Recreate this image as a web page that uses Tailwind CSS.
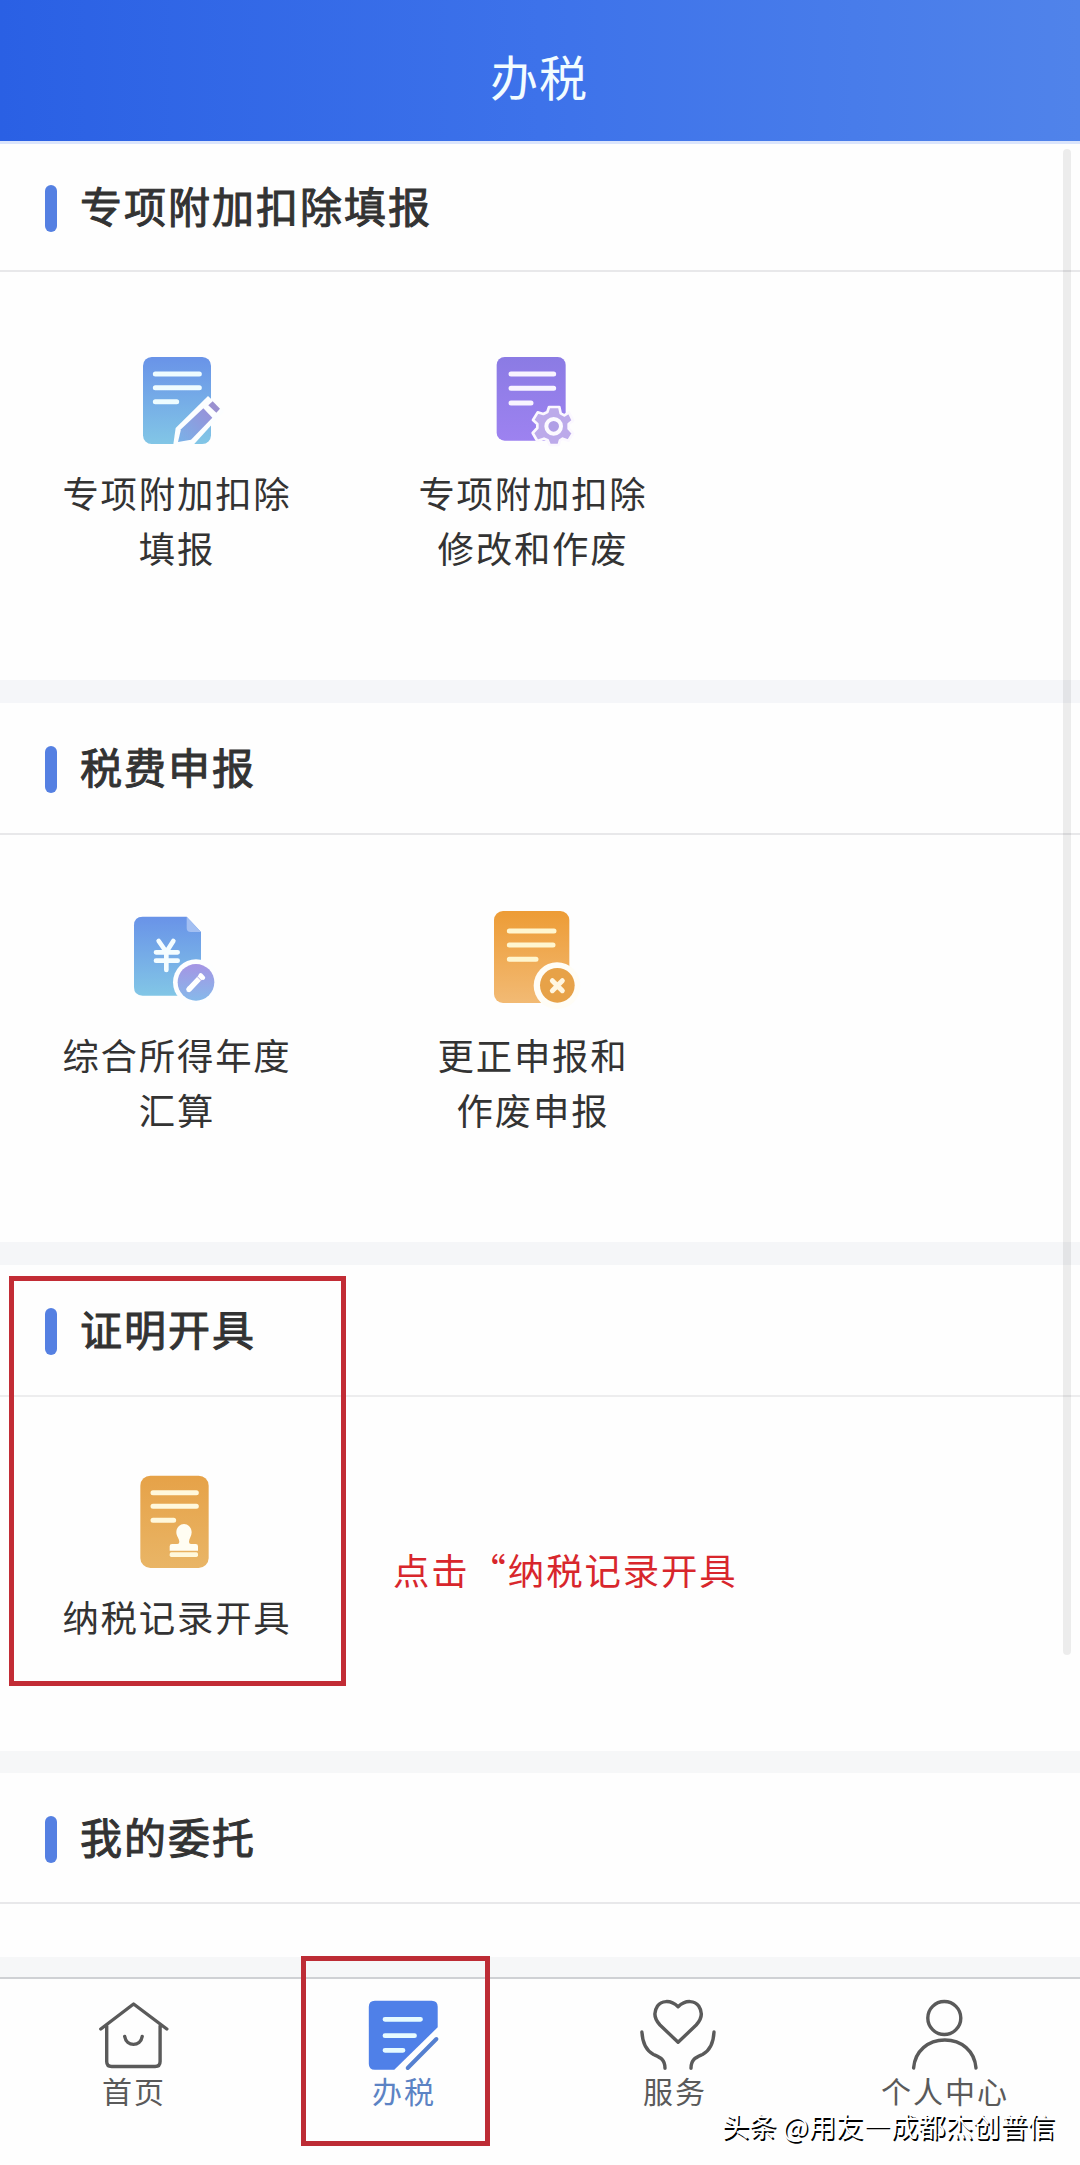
<!DOCTYPE html>
<html lang="zh-CN">
<head>
    <meta charset="UTF-8">
    <meta name="viewport" content="width=device-width, initial-scale=1.0">
    <title>办税</title>
    <script src="https://cdn.jsdelivr.net/npm/@tailwindcss/browser@4"></script>
</head>
<body class="bg-white font-['Noto_Sans_CJK_SC',sans-serif] text-[#333]">
<div class="relative flex flex-col w-[1080px] h-[2165px] overflow-hidden bg-[#fefefe]">

    <!-- 顶部标题 -->
    <header class="flex items-center justify-center h-[141px] shrink-0 pt-[8px] pr-[2px] bg-linear-to-r from-[#2a60e4] via-[#3d72ea] to-[#5083ea]">
        <h1 class="text-[48px] leading-none tracking-[1px] text-[#f2fcff]">办税</h1>
    </header>

    <main class="flex-1 overflow-hidden">
        <!-- 专项附加扣除填报 -->
        <section>
            <div class="flex items-center h-[131px] pt-[2px] pl-[45px] gap-[23px] border-t-3 border-t-[#dbe5fc] border-b-2 border-b-[#e8e8ea]">
                <span class="w-3 h-[47px] rounded-full bg-[#5580e2]"></span>
                <h2 class="pb-[7px] text-[42px] leading-none tracking-[2px] [-webkit-text-stroke:1px_#333]">专项附加扣除填报</h2>
            </div>
            <div class="flex h-[408px] pt-[68px]">
                <div class="flex flex-col items-center w-[354px]">
                    <svg class="size-[120px]" viewBox="-9 0 360 360" fill="none">
                        <defs>
                            <linearGradient id="blue" x1="0" y1="0" x2="0" y2="1">
                                <stop offset="0" stop-color="#6993e8"/>
                                <stop offset="1" stop-color="#82c6e6"/>
                            </linearGradient>
                            <linearGradient id="pen" x1="1" y1="0" x2="0" y2="1">
                                <stop offset="0" stop-color="#9a8fd8"/>
                                <stop offset="1" stop-color="#79b2e8"/>
                            </linearGradient>
                        </defs>
                        <rect x="69" y="51" width="204" height="261" rx="26" fill="url(#blue)"/>
                        <path d="M106 102H238M106 143H238M106 185H170" stroke="#eefcff" stroke-width="15" stroke-linecap="round"/>
                        <path d="M160 313L167 264L264 168L312 214L222 313Z" fill="#fcfeff"/>
                        <path d="M174 306L183 268L250 205L277 233L213 299Z" fill="url(#pen)"/>
                        <path d="M265 196L278 184L300 206L289 218Z" fill="#9a90cf"/>
                    </svg>
                    <p class="mt-[5px] text-[36.4px] leading-[55px] tracking-[1.8px] text-center">专项附加扣除<br>填报</p>
                </div>
                <div class="flex flex-col items-center w-[358px]">
                    <svg class="size-[120px]" viewBox="-21 0 360 360" fill="none">
                        <defs>
                            <linearGradient id="purple" x1="0" y1="0" x2="0" y2="1">
                                <stop offset="0" stop-color="#8b7be4"/>
                                <stop offset="1" stop-color="#9d82f0"/>
                            </linearGradient>
                        </defs>
                        <rect x="50" y="51" width="207" height="251" rx="24" fill="url(#purple)"/>
                        <path d="M93 102H221M93 145H221M93 189H153" stroke="#f8f4ff" stroke-width="15" stroke-linecap="round"/>
                        <path d="M207 201H238L242 220L253 226L267 217L279 242L266 252V266L279 280L265 302L248 296L240 301L236 315H209L203 301L192 296L172 303L158 279L172 264V252L159 240L173 217L190 222L202 216Z" fill="#bcaaea" stroke="#fbf8ff" stroke-width="8" stroke-linejoin="round"/>
                        <circle cx="221" cy="259" r="22" fill="#b09fe6" stroke="#fcfaff" stroke-width="12"/>
                    </svg>
                    <p class="mt-[5px] text-[36.4px] leading-[55px] tracking-[1.8px] text-center">专项附加扣除<br>修改和作废</p>
                </div>
            </div>
        </section>
        <div class="h-[23px] bg-[#f5f6f9]"></div>

        <!-- 税费申报 -->
        <section>
            <div class="flex items-center h-[132px] pt-[3px] pl-[45px] gap-[23px] border-b-2 border-[#e8e8ea]">
                <span class="w-3 h-[47px] rounded-full bg-[#5580e2]"></span>
                <h2 class="pb-[7px] text-[42px] leading-none tracking-[2px] [-webkit-text-stroke:1px_#333]">税费申报</h2>
            </div>
            <div class="flex h-[407px] pt-[67px]">
                <div class="flex flex-col items-center w-[354px]">
                    <svg class="size-[120px]" viewBox="-9 6 360 360" fill="none">
                        <defs>
                            <linearGradient id="badge" x1="0" y1="0" x2="0" y2="1">
                                <stop offset="0" stop-color="#a594e4"/>
                                <stop offset="1" stop-color="#86b9ea"/>
                            </linearGradient>
                        </defs>
                        <path d="M68 50H200L243 96V287H68Q42 287 42 261V76Q42 50 68 50Z" fill="url(#blue)"/>
                        <path d="M200 50L243 96H212Q200 96 200 84Z" fill="#a3bff2"/>
                        <path d="M116 123L139 156L160 123M139 156V210M108 157H173M108 182H173" stroke="#f4fdff" stroke-width="14" stroke-linecap="round" stroke-linejoin="round"/>
                        <circle cx="228" cy="247" r="69" fill="#fdfeff"/>
                        <circle cx="228" cy="247" r="55" fill="url(#badge)"/>
                        <path d="M207 268L241 232" stroke="#fff" stroke-width="16" stroke-linecap="round"/>
                        <path d="M200 275L204 258L216 270Z" fill="#fff"/>
                        <path d="M242 226L249 233" stroke="#fff" stroke-width="13" stroke-linecap="round"/>
                        <path d="M231 229L245 243" stroke="#b0abe4" stroke-width="3"/>
                    </svg>
                    <p class="mt-[5px] text-[36.4px] leading-[55px] tracking-[1.8px] text-center">综合所得年度<br>汇算</p>
                </div>
                <div class="flex flex-col items-center w-[358px]">
                    <svg class="size-[120px]" viewBox="-21 6 360 360" fill="none">
                        <defs>
                            <linearGradient id="orange" x1="0" y1="0" x2="0" y2="1">
                                <stop offset="0" stop-color="#ed9c36"/>
                                <stop offset="1" stop-color="#f2ba74"/>
                            </linearGradient>
                        </defs>
                        <rect x="42" y="33" width="226" height="276" rx="27" fill="url(#orange)"/>
                        <path d="M88 93H222M88 135H219M88 178H168" stroke="#fff6cf" stroke-width="15" stroke-linecap="round"/>
                        <circle cx="231" cy="257" r="70" fill="#fffdf6"/>
                        <circle cx="232" cy="256" r="52" fill="#e7a248"/>
                        <path d="M217 242L247 272M247 242L217 272" stroke="#fff6e0" stroke-width="15" stroke-linecap="round"/>
                    </svg>
                    <p class="mt-[5px] text-[36.4px] leading-[55px] tracking-[1.8px] text-center">更正申报和<br>作废申报</p>
                </div>
            </div>
        </section>
        <div class="h-[23px] bg-[#f5f6f8]"></div>

        <!-- 证明开具 -->
        <section>
            <div class="flex items-center h-[132px] pt-[3px] pl-[45px] gap-[23px] border-b-2 border-[#ededee]">
                <span class="w-3 h-[47px] rounded-full bg-[#5580e2]"></span>
                <h2 class="pb-[7px] text-[42px] leading-none tracking-[2px] [-webkit-text-stroke:1px_#333]">证明开具</h2>
            </div>
            <div class="flex h-[354px] pt-[67px]">
                <div class="flex flex-col items-center w-[354px]">
                    <svg class="size-[120px]" viewBox="-9 12 360 360" fill="none">
                        <defs>
                            <linearGradient id="amber" x1="0" y1="0" x2="0" y2="1">
                                <stop offset="0" stop-color="#e6a248"/>
                                <stop offset="1" stop-color="#e9b566"/>
                            </linearGradient>
                        </defs>
                        <rect x="61" y="47" width="205" height="277" rx="30" fill="url(#amber)"/>
                        <path d="M99 98H229M99 139H229M99 181H161" stroke="#fff8dc" stroke-width="15" stroke-linecap="round"/>
                        <path d="M192 192C205 192 215 203 215 217C215 229 207 236 207 246Q207 252 213 252H227Q234 252 234 259V272H149V259Q149 252 156 252H172Q178 252 178 246C178 236 169 229 169 217C169 203 179 192 192 192Z" fill="#fffdf2"/>
                        <rect x="149" y="277" width="85" height="14" rx="5" fill="#fff8dc"/>
                    </svg>
                    <p class="mt-[5px] text-[36.4px] leading-[55px] tracking-[1.8px] text-center">纳税记录开具</p>
                </div>
                <p class="mt-[78px] ml-[39px] text-[36.4px] leading-[55px] tracking-[1.9px] text-[#d8262c]">点击“纳税记录开具</p>
            </div>
        </section>
        <div class="h-[22px] bg-[#f6f7f8]"></div>

        <!-- 我的委托 -->
        <section>
            <div class="flex items-center h-[131px] pt-[3px] pl-[45px] gap-[23px] border-b-2 border-[#e8e8ea]">
                <span class="w-3 h-[47px] rounded-full bg-[#5580e2]"></span>
                <h2 class="pb-[7px] text-[42px] leading-none tracking-[2px] [-webkit-text-stroke:1px_#333]">我的委托</h2>
            </div>
            <div class="h-[53px]"></div>
        </section>
        <div class="h-[30px] bg-[#f6f7f8]"></div>
    </main>

    <!-- 底部导航 -->
    <nav class="grid grid-cols-4 h-[188px] shrink-0 pt-4 border-t-2 border-[#cfd1d4] bg-[#fefefe] text-[#5a5a5a]">
        <a class="flex flex-col items-center">
            <svg class="size-20" viewBox="0 0 80 80" fill="none" stroke="currentColor" stroke-width="3.4" stroke-linecap="round" stroke-linejoin="round">
                <path d="M5.8 34L38.6 9L71.8 34M11.7 31V66.5Q11.7 71.5 16.7 71.5H60.1Q65.1 71.5 65.1 66.5V31M29.7 41.5C31.5 52 45.5 52 47.2 41.5"/>
            </svg>
            <span class="-mt-[3px] mr-[2px] text-[30px] leading-9 tracking-[2px]">首页</span>
        </a>
        <a class="flex flex-col items-center text-[#5c83c4]">
            <svg class="size-20" viewBox="0 0 80 80" fill="none" stroke-linecap="round">
                <path d="M9.8 5.7H66.7Q72.7 5.7 72.7 11.7V32.3L29.3 74.7H9.8Q3.8 74.7 3.8 68.7V11.7Q3.8 5.7 9.8 5.7Z" fill="#4f80e8"/>
                <path d="M20 24.3H55.5M20 40.7H49.5M20 55.3H38" stroke="#e6fbff" stroke-width="4.8"/>
                <path d="M71.4 44L42.7 73" stroke="#5580d0" stroke-width="4"/>
            </svg>
            <span class="-mt-[3px] mr-[2px] text-[30px] leading-9 tracking-[2px]">办税</span>
        </a>
        <a class="flex flex-col items-center">
            <svg class="size-20 overflow-visible" viewBox="0 0 80 80" fill="none" stroke="currentColor" stroke-width="3.4" stroke-linecap="round" stroke-linejoin="round">
                <path d="M43.1 11.7C35 4 26 6 22.5 11C18.5 17 19.5 24 25 30L43.1 47.3L61.2 30C66.7 24 67.7 17 63.7 11C60.2 6 51.2 4 43.1 11.7Z"/>
                <path d="M6.9 37C7.5 48 11 55.5 18.5 59.5C25 62.5 30 64 30 73.3M79 37C78.5 48 75 55.5 67.5 59.5C61 62.5 56 64 56 73.3"/>
            </svg>
            <span class="-mt-[3px] text-[30px] leading-9 tracking-[2px]">服务</span>
        </a>
        <a class="flex flex-col items-center">
            <svg class="size-20" viewBox="0 0 80 80" fill="none" stroke="currentColor" stroke-width="3.4" stroke-linecap="round">
                <circle cx="39.3" cy="23" r="16.5"/>
                <path d="M8.6 73C10 56 23 45 39.8 45S69.6 56 71 73"/>
            </svg>
            <span class="-mt-[3px] text-[30px] leading-9 tracking-[2px]">个人中心</span>
        </a>
    </nav>

    <!-- 滚动条 -->
    <div class="absolute left-[1063px] top-[149px] w-2 h-[1506px] rounded-full bg-black/7"></div>

    <!-- 标注框 -->
    <div class="absolute left-[9px] top-[1276px] w-[337px] h-[410px] border-5 border-[#c22c35]"></div>
    <div class="absolute left-[301px] top-[1956px] w-[189px] h-[190px] border-5 border-[#bd2c35]"></div>

    <!-- 水印 -->
    <div class="absolute right-[25px] top-[2106px] text-[27.4px] leading-[38px] whitespace-nowrap text-white [text-shadow:1.5px_1.5px_0_#000]">头条 @用友—成都杰创普信</div>
</div>
</body>
</html>
